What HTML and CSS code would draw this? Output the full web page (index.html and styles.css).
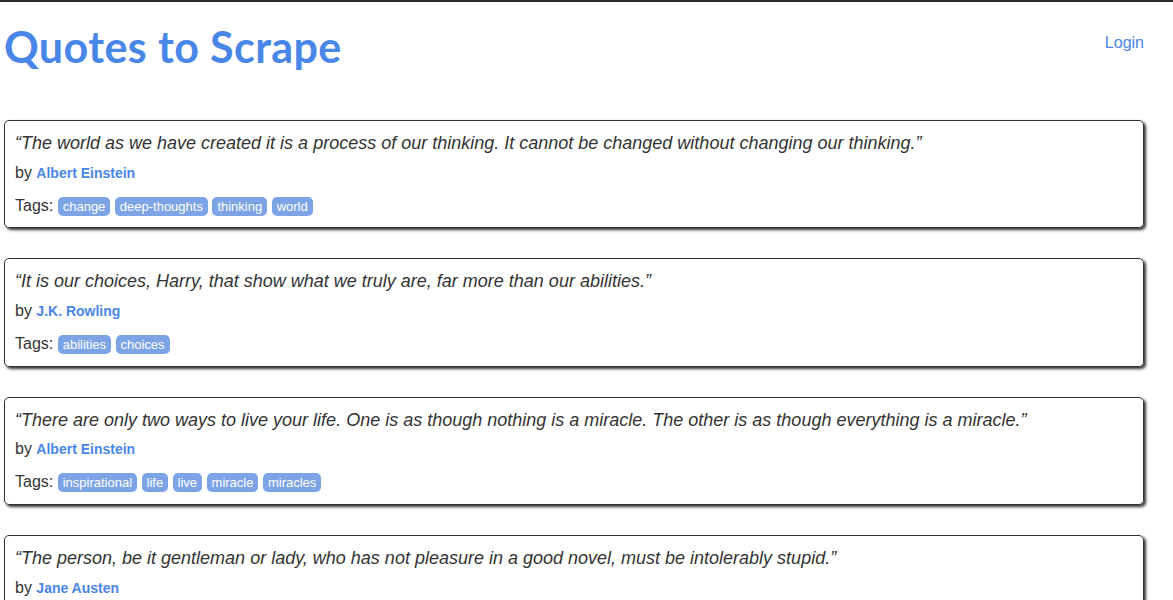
FILE: index.html
```
<!DOCTYPE html>
<html lang="en">
<head>
<meta charset="utf-8">
<title>Quotes to Scrape</title>
<link rel="stylesheet" href="styles.css">
</head>
<body>
<div class="topbar"></div>
<div class="container">
  <header class="header-box">
    <h1 class="brand"><a href="#">Quotes to Scrape</a></h1>
    <a class="login" href="#">Login</a>
  </header>
  <main>
    <div class="quote">
      <span class="text">“The world as we have created it is a process of our thinking. It cannot be changed without changing our thinking.”</span>
      <span class="by">by <small class="author">Albert Einstein</small></span>
      <div class="tags">Tags: <a class="tag" href="#">change</a> <a class="tag" href="#">deep-thoughts</a> <a class="tag" href="#">thinking</a> <a class="tag" href="#">world</a></div>
    </div>
    <div class="quote">
      <span class="text">“It is our choices, Harry, that show what we truly are, far more than our abilities.”</span>
      <span class="by">by <small class="author">J.K. Rowling</small></span>
      <div class="tags">Tags: <a class="tag" href="#">abilities</a> <a class="tag" href="#">choices</a></div>
    </div>
    <div class="quote">
      <span class="text">“There are only two ways to live your life. One is as though nothing is a miracle. The other is as though everything is a miracle.”</span>
      <span class="by">by <small class="author">Albert Einstein</small></span>
      <div class="tags">Tags: <a class="tag" href="#">inspirational</a> <a class="tag" href="#">life</a> <a class="tag" href="#">live</a> <a class="tag" href="#">miracle</a> <a class="tag" href="#">miracles</a></div>
    </div>
    <div class="quote">
      <span class="text">“The person, be it gentleman or lady, who has not pleasure in a good novel, must be intolerably stupid.”</span>
      <span class="by">by <small class="author">Jane Austen</small></span>
      <div class="tags">Tags: <a class="tag" href="#">aliteracy</a> <a class="tag" href="#">books</a> <a class="tag" href="#">classic</a> <a class="tag" href="#">humor</a></div>
    </div>
  </main>
</div>
</body>
</html>
```
FILE: styles.css
```
html, body {
  margin: 0;
  padding: 0;
  background: #fff;
}
body {
  font-family: "Liberation Sans", Arial, Helvetica, sans-serif;
  font-size: 16px;
  line-height: 1.42857;
  color: #333;
}
.topbar {
  height: 2px;
  background: #2b2b2b;
}
.container {
  padding: 0 29px 0 4px;
}
a {
  color: #4886e8;
  text-decoration: none;
}
.header-box {
  display: flex;
  justify-content: space-between;
  align-items: flex-start;
  padding-top: 20px;
  height: 118px;
  box-sizing: border-box;
}
.brand {
  margin: 0;
  font-family: Lato, "Open Sans", sans-serif;
  font-weight: 700;
  font-size: 43px;
  line-height: 50px;
  letter-spacing: 0.4px;
}
.brand a {
  color: #4886e8;
}
.login {
  font-size: 16px;
  margin-top: 10px;
  margin-right: 0;
}
.quote {
  padding: 10px;
  margin-bottom: 30px;
  border: 1px solid #333;
  border-radius: 5px;
  box-shadow: 2px 2px 3px #333;
}
.quote span {
  display: block;
  margin-bottom: 5px;
}
.quote .text {
  font-size: 18px;
  font-style: italic;
}
.quote .by {
  font-size: 16px;
}
.author {
  font-size: 14px;
  font-weight: 700;
  color: #4886e8;
}
.tags {
  margin-top: 10px;
  font-size: 16px;
}
.tag {
  display: inline;
  padding: 2px 5px;
  border-radius: 5px;
  color: #fff;
  font-size: 13px;
  background-color: #7ca3e6;
}
```
